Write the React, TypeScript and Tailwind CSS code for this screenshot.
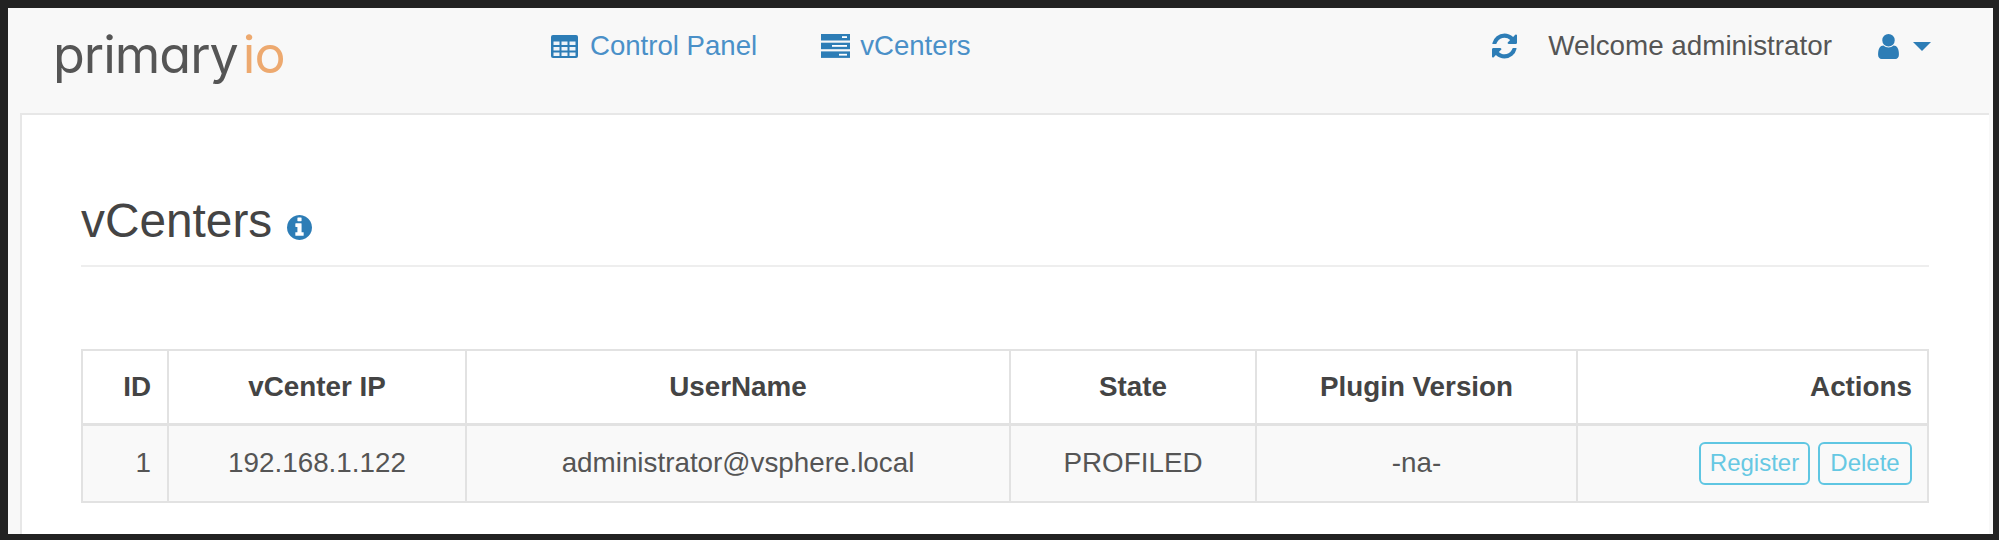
import React from "react";

const BLUE = "#2d7db6";

function TableIcon() {
  const xs = [2.5, 10.5, 18.5];
  const ys = [6.5, 12, 17.5];
  return (
    <svg width="27" height="23" viewBox="0 0 27 23" className="block">
      <rect width="27" height="23" rx="2" fill={BLUE} />
      {ys.map((y) => xs.map((x) => <rect key={`${x}-${y}`} x={x} y={y} width="6" height="3.5" fill="#eef4f9" />))}
    </svg>
  );
}

function ServerIcon() {
  return (
    <svg width="29" height="24" viewBox="0 0 29 24" className="block">
      <rect x="0" y="0" width="29" height="6.5" fill={BLUE} />
      <rect x="0" y="8.7" width="29" height="6.5" fill={BLUE} />
      <rect x="0" y="17.4" width="29" height="6.5" fill={BLUE} />
      <rect x="21" y="2.2" width="5" height="1.8" fill="#fff" />
      <rect x="11" y="11" width="15" height="1.8" fill="#fff" />
      <rect x="18" y="19.8" width="8" height="1.8" fill="#fff" />
    </svg>
  );
}

function RefreshIcon() {
  return (
    <svg width="25" height="26" viewBox="128 128 1536 1536" fill={BLUE} className="block">
      <path d="M1639 1056q0 5-1 7-64 268-268 434.500t-478 166.500q-146 0-282.500-55t-243.500-157l-129 129q-19 19-45 19t-45-19-19-45v-448q0-26 19-45t45-19h448q26 0 45 19t19 45-19 45l-137 137q71 66 161 102t187 36q134 0 250-65t186-179q11-17 53-117 8-23 30-23h192q13 0 22.500 9.500t9.500 22.500zm25-800v448q0 26-19 45t-45 19h-448q-26 0-45-19t-19-45 19-45l138-138q-148-137-349-137-134 0-250 65t-186 179q-11 17-53 117-8 23-30 23h-199q-13 0-22.500-9.500t-9.500-22.500v-7q65-268 270-434.500t480-166.500q146 0 284 55.500t245 156.500l130-129q19-19 45-19t45 19 19 45z" />
    </svg>
  );
}

function UserIcon() {
  return (
    <svg width="21" height="25" viewBox="256 128 1280 1536" fill={BLUE} className="block">
      <path d="M1536 1399q0 109-62.500 187t-150.500 78h-854q-88 0-150.500-78t-62.500-187q0-85 8.500-160.500t31.500-152 58.500-131 94-89 134.500-34.500q131 128 313 128t313-128q76 0 134.500 34.500t94 89 58.500 131 31.500 152 8.500 160.500zm-256-887q0 159-112.500 271.500t-271.500 112.500-271.500-112.500-112.500-271.500 112.500-271.500 271.500-112.500 271.500 112.500 112.500 271.500z" />
    </svg>
  );
}

function CaretIcon() {
  return (
    <svg width="18" height="9" viewBox="0 0 18 9" fill={BLUE} className="block">
      <path d="M0 0h18L9 9z" />
    </svg>
  );
}

function InfoIcon() {
  return (
    <svg width="25" height="25" viewBox="128 128 1536 1536" fill={BLUE} className="ml-[15px] mt-[13px] block">
      <path d="M1152 1376v-160q0-14-9-23t-23-9h-96v-512q0-14-9-23t-23-9h-320q-14 0-23 9t-9 23v160q0 14 9 23t23 9h96v320h-96q-14 0-23 9t-9 23v160q0 14 9 23t23 9h448q14 0 23-9t9-23zm-128-896v-160q0-14-9-23t-23-9h-192q-14 0-23 9t-9 23v160q0 14 9 23t23 9h192q14 0 23-9t9-23zm640 416q0 209-103 385.500t-279.500 279.500-385.500 103-385.500-103-279.500-279.500-103-385.500 103-385.500 279.500-279.500 385.500-103 385.500 103 279.500 279.500 103 385.500z" />
    </svg>
  );
}

const cols = [86, 298, 544, 246, 321, 351];

export default function App() {
  return (
    <div className="h-[540px] bg-[#222222] pl-2 pt-2 pr-[6px] pb-[6px] font-['Liberation_Sans',Arial,sans-serif] text-[#555555]">
      <div className="flex h-full flex-col bg-[#f8f8f8]">
        <header className="flex h-[105px] shrink-0 items-start text-[27.8px] leading-[40px]">
          <div className="ml-[45px] mt-[17px] w-[498px] whitespace-nowrap font-['Inter',sans-serif] text-[52px] font-normal leading-[60px] tracking-[-1px] text-[#555555] [font-feature-settings:'cv11']">
            primary<span className="ml-[5px] text-[#eda96f]">io</span>
          </div>
          <nav className="mt-[18px] flex text-[27.6px] text-[#4a90c8]">
            <a className="flex items-center">
              <span className="mr-[12px]"><TableIcon /></span>
              Control Panel
            </a>
            <a className="ml-[64px] flex items-center">
              <span className="mr-[10px]"><ServerIcon /></span>
              vCenters
            </a>
          </nav>
          <div className="ml-auto mr-[62px] mt-[18px] flex items-center">
            <RefreshIcon />
            <span className="ml-[31px]">Welcome administrator</span>
            <span className="ml-[46px]"><UserIcon /></span>
            <span className="ml-[14px]"><CaretIcon /></span>
          </div>
        </header>
        <main className="ml-3 mr-1 flex-1 overflow-hidden border-l-2 border-t-2 border-[#e7e7e7] bg-white pl-[59px] pr-[60px]">
          <h1 className="mt-[74px] flex h-[78px] items-center border-b-2 border-[#eeeeee] pb-[12px] text-[47.8px] font-normal leading-[60px] text-[#444444]">
            vCenters
            <InfoIcon />
          </h1>
          <table className="mt-[82px] w-[1846px] table-fixed border-collapse text-[27.8px] leading-[40px]">
            <colgroup>
              {cols.map((w, i) => <col key={i} style={{ width: w }} />)}
            </colgroup>
            <thead>
              <tr className="h-[74px] font-bold text-[#444444]">
                <th className="border-2 border-b-[3px] border-[#e2e2e2] px-4 text-right">ID</th>
                <th className="border-2 border-b-[3px] border-[#e2e2e2] px-4 text-center">vCenter IP</th>
                <th className="border-2 border-b-[3px] border-[#e2e2e2] px-4 text-center">UserName</th>
                <th className="border-2 border-b-[3px] border-[#e2e2e2] px-4 text-center">State</th>
                <th className="border-2 border-b-[3px] border-[#e2e2e2] px-4 text-center">Plugin Version</th>
                <th className="border-2 border-b-[3px] border-[#e2e2e2] pl-4 pr-[15px] text-right">Actions</th>
              </tr>
            </thead>
            <tbody>
              <tr className="h-[78px] bg-[#f9f9f9] text-[#555555]">
                <td className="border-2 border-[#e2e2e2] px-4 text-right">1</td>
                <td className="border-2 border-[#e2e2e2] px-4 text-center">192.168.1.122</td>
                <td className="border-2 border-[#e2e2e2] px-4 text-center">administrator@vsphere.local</td>
                <td className="border-2 border-[#e2e2e2] px-4 text-center">PROFILED</td>
                <td className="border-2 border-[#e2e2e2] px-4 text-center">-na-</td>
                <td className="border-2 border-[#e2e2e2] pl-4 pr-[15px]">
                  <div className="flex justify-end gap-2">
                    <button className="h-[43px] w-[111px] rounded-[6px] border-2 border-[#5fc6e2] text-[24px] leading-none text-[#66c8e3]">Register</button>
                    <button className="h-[43px] w-[94px] rounded-[6px] border-2 border-[#5fc6e2] text-[24px] leading-none text-[#66c8e3]">Delete</button>
                  </div>
                </td>
              </tr>
            </tbody>
          </table>
        </main>
      </div>
    </div>
  );
}
